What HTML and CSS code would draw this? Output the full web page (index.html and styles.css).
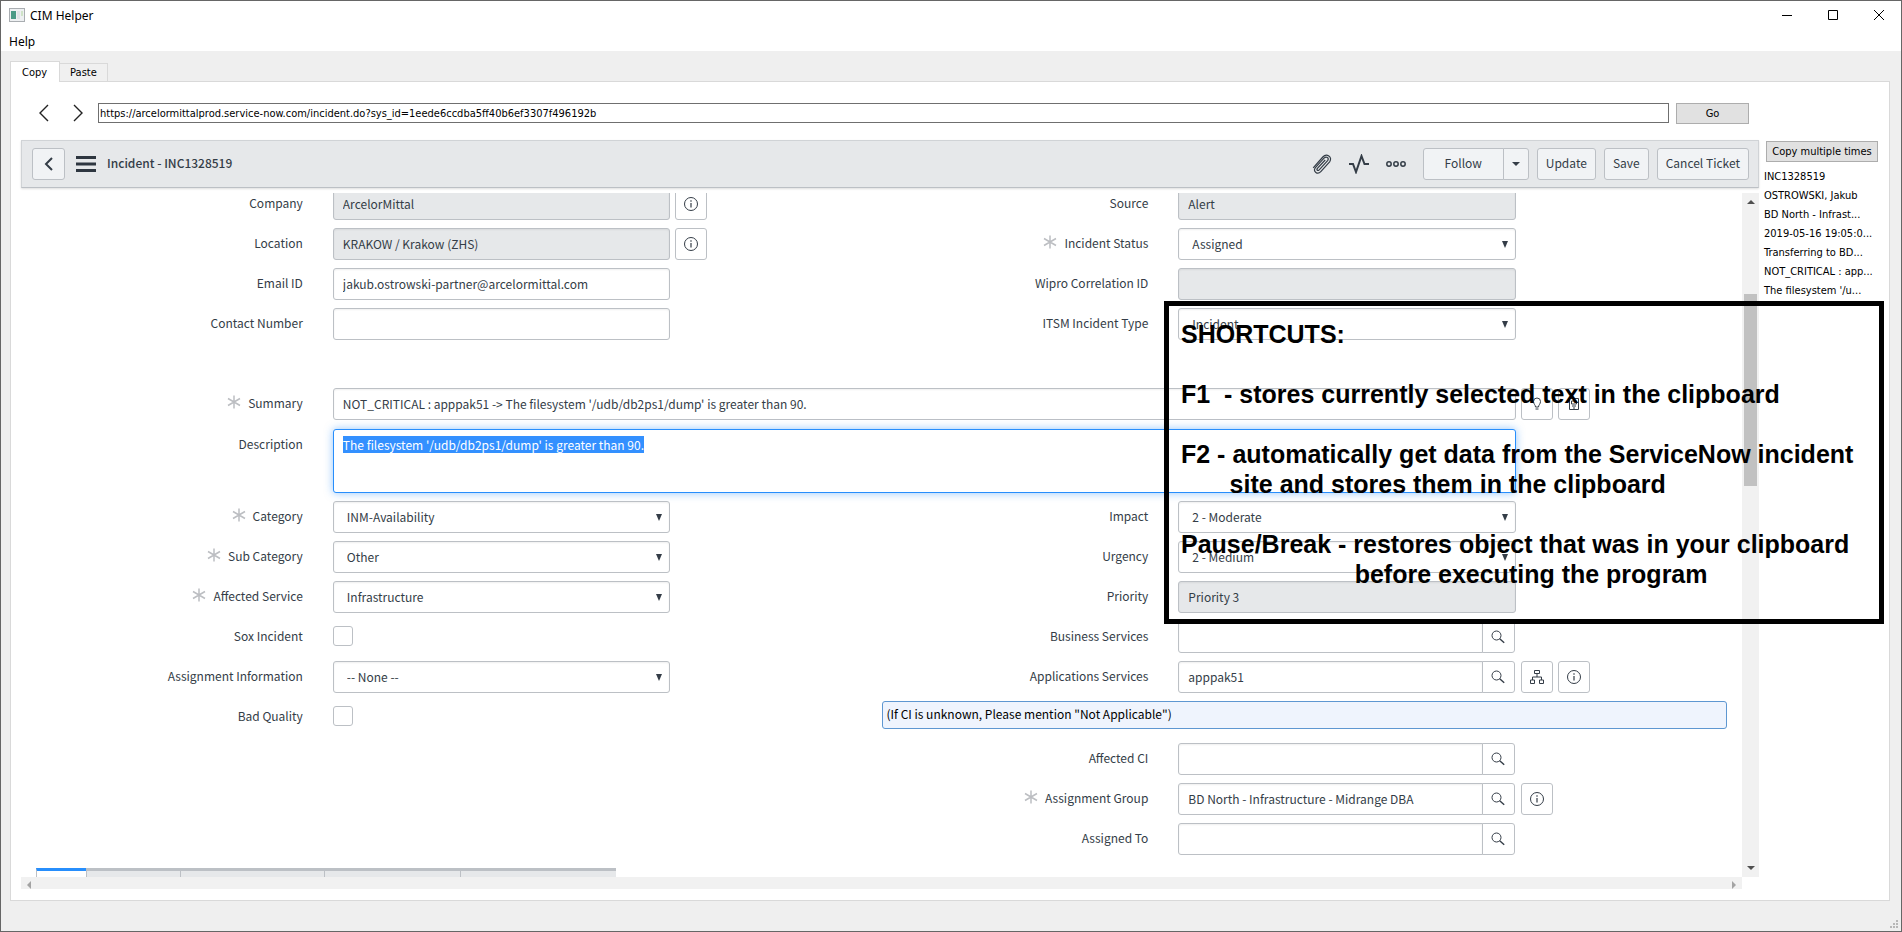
FILE: index.html
```html
<!DOCTYPE html>
<html lang="en">
<head>
<meta charset="utf-8">
<title>CIM Helper</title>
<link rel="stylesheet" href="styles.css">
</head>
<body>
<svg class="defs" aria-hidden="true">
  <symbol id="info" viewBox="0 0 14 14"><circle cx="7" cy="7" r="6.5" fill="none" stroke="currentColor"/><path d="M7 6v4.500M7 3.300v1.500" stroke="currentColor" stroke-width="1.200" fill="none"/></symbol>
  <symbol id="search" viewBox="0 0 14 14"><circle cx="5.5" cy="5.5" r="4.5" fill="none" stroke="currentColor"/><path d="M8.700 8.700l4.500 4" stroke="currentColor" stroke-width="1.400" fill="none"/></symbol>
  <symbol id="tree" viewBox="0 0 14 14"><path d="M4.500 .5h5v3h-5zM7 3.500v3.500M2.500 10V7h9v3M.5 10h4v3.500h-4zM9.500 10h4v3.500h-4z" fill="none" stroke="currentColor"/></symbol>
  <symbol id="bulb" viewBox="0 0 14 14"><path d="M5.500 10C5.500 8 3.500 7 3.500 4.500a3.500 3.500 0 0 1 7 0C10.500 7 8.500 8 8.500 10zM5.500 12h3" fill="none" stroke="currentColor"/></symbol>
  <symbol id="book" viewBox="0 0 14 14"><path d="M2.500 1.500h9v11h-9zM4.500 4h5v3h-5zM5 9h4M6 11h2" fill="none" stroke="currentColor"/></symbol>
  <symbol id="star" viewBox="0 0 14 14"><path d="M7 0.500v13M1 3.500l12 7M13 3.500l-12 7" stroke="currentColor" stroke-width="1.500" fill="none"/></symbol>
</svg>
<div class="window">
  <header class="titlebar">
    <svg class="app-icon" viewBox="0 0 16 14"><rect x=".5" y=".5" width="15" height="13" fill="#eef0f2" stroke="#a9adb1"/><rect x="2" y="3" width="5" height="8" fill="#4a9a86"/><rect x="8" y="3" width="3" height="8" fill="#dfe3e6"/><rect x="12" y="3" width="2" height="5" fill="#cfe3c8"/></svg>
    <h1 class="window-title">CIM Helper</h1>
    <div class="window-buttons">
      <button aria-label="Minimize"><svg viewBox="0 0 12 12"><path d="M1 6.500h10" stroke="#000" fill="none"/></svg></button>
      <button aria-label="Maximize"><svg viewBox="0 0 12 12"><path d="M1.500 1.500h9v9h-9z" stroke="#000" fill="none"/></svg></button>
      <button aria-label="Close"><svg viewBox="0 0 12 12"><path d="M1 1l10 10M11 1L1 11" stroke="#000" fill="none"/></svg></button>
    </div>
  </header>
  <nav class="menubar"><button>Help</button></nav>
  <main class="client">
    <div class="tabs"><button class="tab active">Copy</button><button class="tab">Paste</button></div>
    <div class="pane">
      <div class="browser">
        <div class="address">
          <button class="nav" aria-label="Back"><svg viewBox="0 0 10 18"><path d="M9 1L1 9l8 8" fill="none" stroke="#222" stroke-width="1.400"/></svg></button>
          <button class="nav" aria-label="Forward"><svg viewBox="0 0 10 18"><path d="M1 1l8 8-8 8" fill="none" stroke="#222" stroke-width="1.400"/></svg></button>
          <input class="url" aria-label="Address" value="https://arcelormittalprod.service-now.com/incident.do?sys_id=1eede6ccdba5ff40b6ef3307f496192b">
          <button class="sys-button go">Go</button>
        </div>
        <div class="incident-bar">
          <button class="btn back" aria-label="Back"><svg viewBox="0 0 10 14"><path d="M8 1L2 7l6 6" fill="none" stroke="#343d47" stroke-width="2"/></svg></button>
          <button class="icon-btn burger" aria-label="Menu"><svg viewBox="0 0 20 16"><path d="M0 1.500h20M0 8h20M0 14.500h20" stroke="#2e3640" stroke-width="3"/></svg></button>
          <h2>Incident - INC1328519</h2>
          <div class="actions">
            <button class="icon-btn" aria-label="Attachments"><svg viewBox="0 0 20 20"><path d="M1.200 13.800L10.800 3C14.500-1 21 2.800 17.600 7.800L8.800 17.600C5.600 21.200.6 17.600 3.400 13.600L12 4.200C14.400 1.800 17.400 4 15.600 6.600L7.200 15.800C5.800 17.200 4.200 16 5.400 14.400L13.200 6" fill="none" stroke="#343d47" stroke-width="1.200"/></svg></button>
            <button class="icon-btn" aria-label="Activity"><svg viewBox="0 0 20 20"><path d="M0 10h4l3 8 5.500-16 3 8H20" fill="none" stroke="#343d47" stroke-width="2"/></svg></button>
            <button class="icon-btn" aria-label="More"><svg viewBox="0 0 20 20"><g fill="none" stroke="#343d47" stroke-width="1.500"><circle cx="3" cy="10" r="2.200"/><circle cx="10" cy="10" r="2.200"/><circle cx="17" cy="10" r="2.200"/></g></svg></button>
            <div class="split"><button class="btn follow">Follow</button><button class="btn caret" aria-label="Follow options"><svg viewBox="0 0 8 4"><path d="M0 0h8L4 4z" fill="#343d47"/></svg></button></div>
            <button class="btn">Update</button>
            <button class="btn">Save</button>
            <button class="btn">Cancel Ticket</button>
          </div>
        </div>
        <div class="viewport">
          <form class="form">
            <div class="columns">
              <div class="column">
                <div class="row"><label for="company">Company</label><input id="company" class="field" value="ArcelorMittal" readonly><div class="addons"><button type="button" class="addon" aria-label="Company details"><svg><use href="#info"/></svg></button></div></div>
                <div class="row"><label for="location">Location</label><input id="location" class="field" value="KRAKOW / Krakow (ZHS)" readonly><div class="addons"><button type="button" class="addon" aria-label="Location details"><svg><use href="#info"/></svg></button></div></div>
                <div class="row"><label for="email">Email ID</label><input id="email" class="field" value="jakub.ostrowski-partner@arcelormittal.com"></div>
                <div class="row"><label for="contact">Contact Number</label><input id="contact" class="field"></div>
              </div>
              <div class="column">
                <div class="row"><label for="source">Source</label><input id="source" class="field" value="Alert" readonly></div>
                <div class="row"><label for="status"><svg class="star"><use href="#star"/></svg>Incident Status</label><select id="status" class="field"><option>Assigned</option></select></div>
                <div class="row"><label for="wipro">Wipro Correlation ID</label><input id="wipro" class="field" readonly></div>
                <div class="row"><label for="type">ITSM Incident Type</label><select id="type" class="field"><option>Incident</option></select></div>
              </div>
            </div>
            <div class="wide">
              <div class="row"><label for="summary"><svg class="star"><use href="#star"/></svg>Summary</label><input id="summary" class="field" value="NOT_CRITICAL : apppak51 -&gt; The filesystem '/udb/db2ps1/dump' is greater than 90."><div class="addons"><button type="button" class="addon" aria-label="Suggestion"><svg><use href="#bulb"/></svg></button><button type="button" class="addon" aria-label="Knowledge"><svg><use href="#book"/></svg></button></div></div>
              <div class="row"><label id="description-label">Description</label><div class="field textarea" role="textbox" aria-multiline="true" aria-labelledby="description-label" contenteditable="true"><mark>The filesystem '/udb/db2ps1/dump' is greater than 90.</mark></div></div>
            </div>
            <div class="columns">
              <div class="column">
                <div class="row"><label for="category"><svg class="star"><use href="#star"/></svg>Category</label><select id="category" class="field"><option>INM-Availability</option></select></div>
                <div class="row"><label for="sub"><svg class="star"><use href="#star"/></svg>Sub Category</label><select id="sub" class="field"><option>Other</option></select></div>
                <div class="row"><label for="service"><svg class="star"><use href="#star"/></svg>Affected Service</label><select id="service" class="field"><option>Infrastructure</option></select></div>
                <div class="row"><label for="sox">Sox Incident</label><input id="sox" class="check" type="checkbox"></div>
                <div class="row"><label for="assigninfo">Assignment Information</label><select id="assigninfo" class="field"><option>-- None --</option></select></div>
                <div class="row"><label for="bad">Bad Quality</label><input id="bad" class="check" type="checkbox"></div>
              </div>
              <div class="column">
                <div class="row"><label for="impact">Impact</label><select id="impact" class="field"><option>2 - Moderate</option></select></div>
                <div class="row"><label for="urgency">Urgency</label><select id="urgency" class="field"><option>2 - Medium</option></select></div>
                <div class="row"><label for="priority">Priority</label><input id="priority" class="field" value="Priority 3" readonly></div>
                <div class="row"><label for="business">Business Services</label><div class="lookup"><input id="business" class="field"><button type="button" class="addon" aria-label="Look up"><svg><use href="#search"/></svg></button></div></div>
                <div class="row"><label for="apps">Applications Services</label><div class="lookup"><input id="apps" class="field" value="apppak51"><button type="button" class="addon" aria-label="Look up"><svg><use href="#search"/></svg></button></div><div class="addons"><button type="button" class="addon" aria-label="Dependencies"><svg><use href="#tree"/></svg></button><button type="button" class="addon" aria-label="Service details"><svg><use href="#info"/></svg></button></div></div>
                <p class="note">(If CI is unknown, Please mention "Not Applicable")</p>
                <div class="row"><label for="ci">Affected CI</label><div class="lookup"><input id="ci" class="field"><button type="button" class="addon" aria-label="Look up"><svg><use href="#search"/></svg></button></div></div>
                <div class="row"><label for="group"><svg class="star"><use href="#star"/></svg>Assignment Group</label><div class="lookup"><input id="group" class="field" value="BD North - Infrastructure - Midrange DBA"><button type="button" class="addon" aria-label="Look up"><svg><use href="#search"/></svg></button></div><div class="addons"><button type="button" class="addon" aria-label="Group details"><svg><use href="#info"/></svg></button></div></div>
                <div class="row"><label for="assigned">Assigned To</label><div class="lookup"><input id="assigned" class="field"><button type="button" class="addon" aria-label="Look up"><svg><use href="#search"/></svg></button></div></div>
              </div>
            </div>
            <div class="section-tabs"><span class="current"></span><span></span><span></span><span></span><span></span></div>
          </form>
          <div class="vbar"><svg viewBox="0 0 8 4"><path d="M0 4h8L4 0z" fill="#505050"/></svg><div class="track"><div class="thumb"></div></div><svg viewBox="0 0 8 4"><path d="M0 0h8L4 4z" fill="#505050"/></svg></div>
        </div>
        <div class="hbar"><svg viewBox="0 0 4 8"><path d="M4 0v8L0 4z" fill="#a3a3a3"/></svg><svg viewBox="0 0 4 8"><path d="M0 0v8l4-4z" fill="#a3a3a3"/></svg></div>
      </div>
      <aside class="side">
        <button class="sys-button">Copy multiple times</button>
        <ul>
          <li>INC1328519</li>
          <li>OSTROWSKI, Jakub</li>
          <li>BD North - Infrast...</li>
          <li>2019-05-16 19:05:0...</li>
          <li>Transferring to BD...</li>
          <li>NOT_CRITICAL : app...</li>
          <li>The filesystem '/u...</li>
        </ul>
      </aside>
    </div>
  </main>
  <footer class="statusbar"><svg viewBox="0 0 8 8"><path d="M6 0h2v2H6zM3 3h2v2H3zM6 3h2v2H6zM0 6h2v2H0zM3 6h2v2H3zM6 6h2v2H6z" fill="#b8b8b8"/></svg></footer>
  <section class="shortcuts">
    <p>SHORTCUTS:</p>
    <p>F1  - stores currently selected text in the clipboard</p>
    <p>F2 - automatically get data from the ServiceNow incident
       site and stores them in the clipboard</p>
    <p>Pause/Break - restores object that was in your clipboard
                         before executing the program</p>
  </section>
</div>
</body>
</html>
```
FILE: styles.css
```css
* { box-sizing: border-box; }
body { margin: 0; font-family: "Noto Sans", sans-serif; font-size: 12px; color: #000; }
button, input, select { font: inherit; color: inherit; margin: 0; }
button { padding: 0; background: none; border: 0; }
h1, h2, p, ul { margin: 0; padding: 0; font-weight: 400; }
.defs { position: absolute; width: 0; height: 0; }

.window { position: relative; display: flex; flex-direction: column; min-height: 100vh; border: 1px solid #666; background: #efefef; }
.titlebar { display: flex; align-items: center; height: 28px; padding: 0 16px 0 8px; background: #fff; }
.app-icon { width: 16px; height: 14px; margin-right: 5px; }
.window-title { font-size: 12px; }
.window-buttons { display: flex; gap: 34px; margin-left: auto; }
.window-buttons svg { display: block; width: 12px; height: 12px; }
.menubar { height: 22px; padding-left: 8px; background: #fff; line-height: 26px; }
.menubar button { display: block; }

.client { flex: 1; display: flex; flex-direction: column; padding: 10px 11px 0 9px; font-family: "DejaVu Sans Condensed", "DejaVu Sans", sans-serif; font-size: 11px; }
.tabs { display: flex; align-items: flex-end; height: 20px; }
.tab { height: 18px; padding: 0 10px; border: 1px solid #d9d9d9; border-width: 1px 1px 0 0; background: #f0f0f0; }
.tab.active { height: 21px; margin-bottom: -1px; padding: 0 12px 0 11px; border-left-width: 1px; background: #fff; position: relative; z-index: 1; }
.pane { flex: 1; display: flex; border: 1px solid #d9d9d9; background: #fff; padding: 20px 11px 11px 10px; gap: 7px; }
.browser { flex: 1; min-width: 0; display: flex; flex-direction: column; }
.address { display: flex; align-items: center; height: 22px; padding: 0 10px 0 18px; }
.nav { width: 10px; height: 18px; margin-right: 24px; }
.nav + .nav { margin-right: 15px; }
.nav svg { display: block; width: 10px; height: 18px; }
.url { flex: 1; height: 20px; margin-right: 7px; padding: 0 1px; border: 1px solid #6f6f6f; background: #fff; }
.sys-button { height: 21px; border: 1px solid #adadad; background: #e1e1e1; }
.go { width: 73px; }

.incident-bar { display: flex; align-items: center; height: 48px; margin-top: 16px; padding: 0 9px 0 10px; border: 1px solid #d0d3d6; border-bottom-color: #bcc0c5; background: #e6e8ea; color: #343d47; font-family: "Noto Sans CJK SC", sans-serif; font-size: 12px; box-shadow: 0 1px 2px #0002; }
.incident-bar h2 { padding-bottom: 4px; font-size: 12px; font-weight: 500; }
.btn { height: 32px; padding: 0 8px 3px; border: 1px solid #bcc0c5; border-radius: 3px; background: #f1f3f5; }
.back { width: 33px; padding: 0; }
.back svg { display: block; width: 10px; height: 14px; margin: auto; }
.icon-btn svg { display: block; width: 20px; height: 20px; }
.burger { margin: 0 11px; }
.burger svg { height: 16px; }
.actions { display: flex; align-items: center; margin-left: auto; gap: 8px; }
.actions .icon-btn { margin-right: 9px; }
.split { display: flex; }
.follow { width: 81px; border-radius: 3px 0 0 3px; }
.caret { width: 26px; margin-left: -1px; padding: 0; border-radius: 0 3px 3px 0; }
.caret svg { display: block; width: 8px; height: 4px; margin: auto; }

.viewport { position: relative; flex: 1; display: flex; margin-top: 5px; overflow: hidden; }
.form { flex: 1; height: 684px; margin-right: 17px; padding: 0 15px; overflow: hidden; color: #343d47; font-family: "Noto Sans CJK SC", sans-serif; font-size: 12px; }
.columns { display: grid; grid-template-columns: 1fr 1fr; }
.columns:first-child { margin-top: -5px; }
.column { display: grid; gap: 8px; align-content: start; }
.wide { display: grid; gap: 9px; margin: 48px 0 8px; }
.row { display: grid; grid-template-columns: 4fr 5fr 3fr; min-height: 32px; }
.wide .row { grid-template-columns: 4fr 17fr 3fr; }
label { display: flex; justify-content: flex-end; align-items: center; height: 32px; padding-bottom: 4px; margin-right: 15px; white-space: nowrap; }
.star { width: 14px; height: 14px; margin-right: 7px; color: #bcbec2; }
.field { width: auto; min-width: 0; height: 32px; margin-left: 15px; padding: 0 9px 2px; border: 1px solid #bcc0c5; border-radius: 3px; background: #fff; box-shadow: inset 0 1px 2px #0001; }
.field[readonly] { background: #e6e8ea; }
select.field { appearance: none; padding-left: 13px; background: #fff url("data:image/svg+xml,%3Csvg xmlns='http://www.w3.org/2000/svg' width='6' height='7'%3E%3Cpath d='M0 0h6L3 7z' fill='%23343d47'/%3E%3C/svg%3E") no-repeat right 7px center; }
.textarea { height: 64px; padding: 6px 9px; border-color: #278efc; box-shadow: 0 0 8px #278efc80; line-height: 17px; outline: 0; }
mark { display: inline-block; background: #3390ff; color: #fff; }
.addons { display: flex; gap: 5px; padding-left: 5px; }
.addon { width: 32px; height: 32px; border: 1px solid #bcc0c5; border-radius: 3px; background: #fff; }
.addon svg { display: block; width: 14px; height: 14px; margin: auto; }
.lookup { display: flex; margin-left: 15px; padding-right: 1px; }
.lookup .field { flex: 1; margin: 0; border-radius: 3px 0 0 3px; }
.lookup .addon { width: 33px; margin-left: -1px; border-radius: 0 3px 3px 0; }
.check { appearance: none; width: 20px; height: 20px; margin: 5px 0 0 15px; border: 1px solid #bcc0c5; border-radius: 3px; background: #fff; }
.note { height: 28px; margin-bottom: 6px; padding-left: 4px; border: 1px solid #5e97d1; border-radius: 3px; background: #eff4fd; color: #000; line-height: 24px; }
.section-tabs { display: grid; width: 580px; grid-template-columns: 50px 94px 144px 136px 156px; margin-top: 13px; border-right: 1px solid #bcc0c5; }
.section-tabs span { height: 12px; border-top: 3px solid #bcc0c5; border-left: 1px solid #bcc0c5; background: #e6e8ea; }
.section-tabs .current { border-top-color: #278efc; background: #fff; }
.vbar { position: absolute; top: 0; right: 0; bottom: 0; display: flex; flex-direction: column; align-items: center; width: 17px; padding: 7px 0; background: #f1f1f1; }
.vbar svg { width: 8px; height: 4px; }
.track { flex: 1; width: 13px; padding-top: 90px; }
.thumb { height: 192px; background: #c1c1c1; }
.hbar { display: flex; justify-content: space-between; align-items: flex-end; height: 12px; margin-right: 17px; padding: 0 6px; background: #f1f1f1; }
.hbar svg { width: 4px; height: 8px; }

.side { width: 112px; padding-top: 39px; }
.side .sys-button { width: 112px; }
.side ul { margin: 5px 0 0 -2px; list-style: none; line-height: 19px; white-space: nowrap; }
.statusbar { height: 30px; display: flex; justify-content: flex-end; align-items: flex-end; padding: 3px; }
.statusbar svg { width: 8px; height: 8px; }
.shortcuts { position: absolute; top: 300px; right: 17px; width: 720px; padding: 13px 12px 0; border: 5px solid #000; font: 700 25px/30px "Liberation Sans", Arial, sans-serif; }
.shortcuts p { margin-bottom: 30px; font-weight: 700; white-space: pre; }
```
